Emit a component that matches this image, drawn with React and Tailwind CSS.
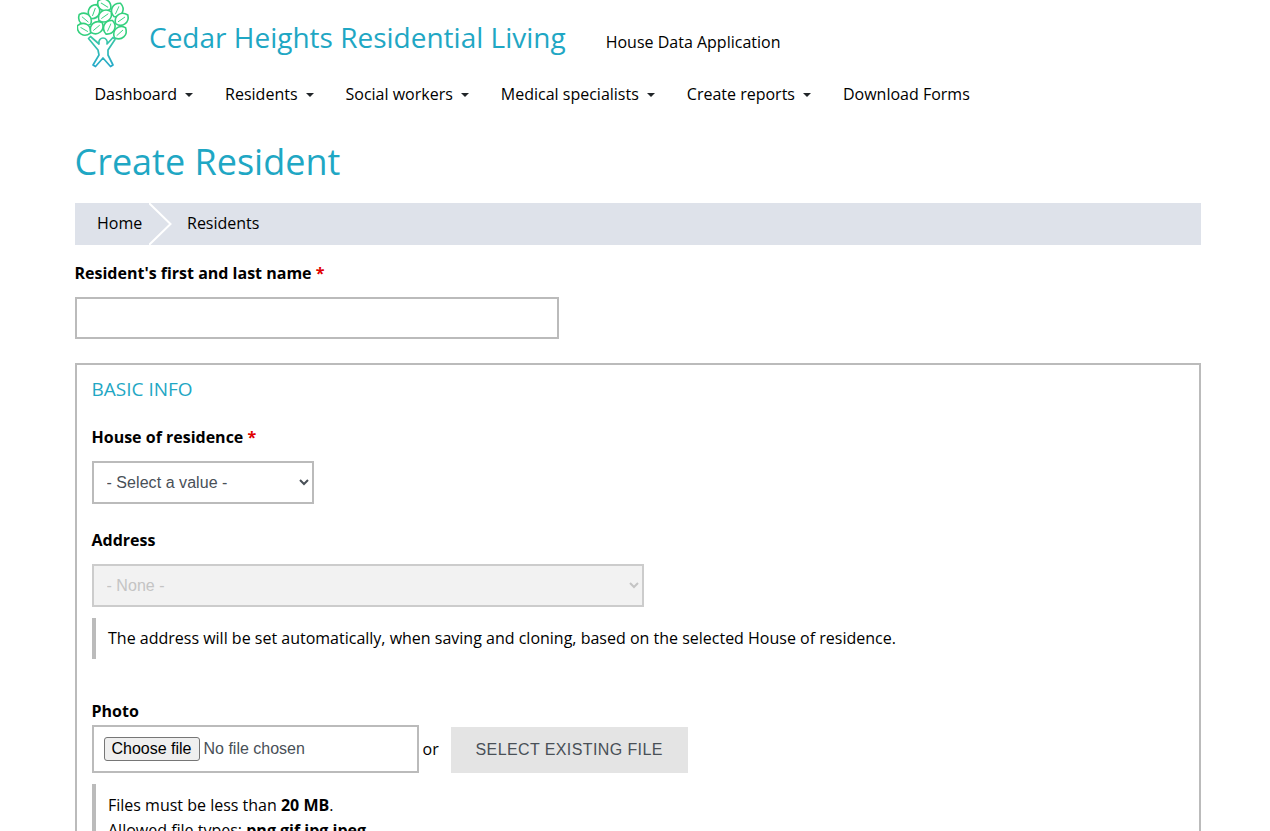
import React from "react";

function Leaf({ x, y, r, rx = 7.5, ry = 7.5 }) {
  return (
    <g transform={`translate(${x} ${y}) rotate(${r})`}>
      <path
        d={`M0 ${-ry} C${rx} ${-ry * 0.6} ${rx} ${ry * 0.6} 0 ${ry} C${-rx} ${ry * 0.6} ${-rx} ${-ry * 0.6} 0 ${-ry} Z`}
        fill="#fff"
        stroke="url(#lg)"
        strokeWidth="1.6"
      />
      <path d={`M0 ${-ry + 3.5} L0 ${ry - 3}`} stroke="url(#lg)" strokeWidth="0.9" fill="none" />
    </g>
  );
}

function Logo() {
  return (
    <svg width="56" height="70" viewBox="0 0 56 70" className="shrink-0">
      <defs>
        <linearGradient id="lg" x1="0" y1="0" x2="0" y2="70" gradientUnits="userSpaceOnUse">
          <stop offset="0" stopColor="#33d07c" />
          <stop offset="0.5" stopColor="#3acba0" />
          <stop offset="1" stopColor="#25a6cf" />
        </linearGradient>
      </defs>
      <Leaf x={27.3} y={5} r={-58} />
      <Leaf x={17} y={11.7} r={20} />
      <Leaf x={40.3} y={10} r={25} />
      <Leaf x={28} y={16} r={55} />
      <Leaf x={44.7} y={19.3} r={55} />
      <Leaf x={8} y={19.3} r={-50} />
      <Leaf x={7} y={29.3} r={-60} />
      <Leaf x={19.7} y={27.7} r={50} />
      <Leaf x={32.3} y={27.3} r={25} />
      <Leaf x={43} y={32.7} r={48} />
      <path
        d="M13.5 36.5 L22 44 C21 40 24 38 26 38 C29 38 31 41 30 44 L36 37.5 L38 39.5 L31 50 L31 55 L36 65 L33.5 66.5 L26 58 L18.5 66.5 L16 65 L22 55 L21 50 L11.5 38.5 Z"
        fill="#fff"
        stroke="url(#lg)"
        strokeWidth="1.7"
        strokeLinejoin="round"
      />
    </svg>
  );
}

function NavItem({ label, caret = true }) {
  return (
    <a className="flex items-center px-4 h-10 text-black text-base whitespace-nowrap">
      {label}
      {caret && (
        <span className="ml-2 w-0 h-0 border-x-[4.8px] border-x-transparent border-t-[4.8px] border-t-[#212529] mt-[2px]" />
      )}
    </a>
  );
}

function Req() {
  return <span className="text-[#e00000]"> *</span>;
}

function Label({ children }) {
  return <label className="block font-bold text-base leading-6 text-black">{children}</label>;
}

const native = { fontFamily: '"Liberation Sans", Arial, sans-serif' };

export default function App() {
  return (
    <div className="h-[831px] overflow-hidden bg-white text-black font-['Open_Sans',sans-serif]">
      <div className="w-[1126.5px] ml-[74.5px]">
        <header className="flex items-start pl-[2.5px] h-[70px]">
          <Logo />
          <span className="ml-[16px] mt-[15px] text-[28px] leading-[44px] text-[#1fa7c4] whitespace-nowrap">
            Cedar Heights Residential Living
          </span>
          <span className="ml-10 mt-[30px] text-base leading-6">House Data Application</span>
        </header>
        <nav className="flex pl-1 mt-1">
          <NavItem label="Dashboard" />
          <NavItem label="Residents" />
          <NavItem label="Social workers" />
          <NavItem label="Medical specialists" />
          <NavItem label="Create reports" />
          <NavItem label="Download Forms" caret={false} />
        </nav>
        <h1 className="mt-[21px] text-[36px] leading-[54px] text-[#1fa7c4] font-normal">Create Resident</h1>
        <div className="mt-[14px] h-[42px] pb-[2px] bg-[#dee2ea] flex items-center relative text-base">
          <span className="pl-[22.5px] w-[112.5px]">Home</span>
          <span>Residents</span>
          <svg width="26" height="42" viewBox="0 0 26 42" className="absolute left-[74.5px] top-0">
            <path d="M0 0 L21.5 21 L0 42" fill="none" stroke="#fff" strokeWidth="2" />
          </svg>
        </div>
        <div className="mt-4">
          <Label>
            Resident's first and last name
            <Req />
          </Label>
        </div>
        <input
          type="text"
          className="block mt-3 w-[484px] h-[42px] border-2 border-[#bbbbbb] bg-white outline-none"
        />
        <fieldset className="mt-6 border-2 border-[#bbbbbb] px-[15px] pt-[10px] h-[600px]">
          <div className="text-[19px] leading-[28px] text-[#1fa7c4]">BASIC INFO</div>
          <div className="mt-[22px]">
            <Label>
              House of residence
              <Req />
            </Label>
          </div>
          <select
            style={native}
            className="block mt-3 w-[222px] h-[43px] pl-[9px] border-2 border-[#bbbbbb] bg-white text-base text-[#495057] tracking-[0.05px] outline-none"
            defaultValue=""
          >
            <option value="">- Select a value -</option>
          </select>
          <div className="mt-[24px]">
            <Label>Address</Label>
          </div>
          <select
            disabled
            style={native}
            className="block mt-3 w-[552px] h-[43px] pl-[9px] border-2 border-[#cccccc] bg-[#f2f2f2] text-base text-[#c4c4c4] tracking-[0.05px] outline-none"
            defaultValue=""
          >
            <option value="">- None -</option>
          </select>
          <div className="mt-[11px] border-l-4 border-[#bbbbbb] pl-[12.5px] pb-[2px] h-[41px] flex items-center text-base">
            The address will be set automatically, when saving and cloning, based on the selected House of residence.
          </div>
          <div className="mt-10">
            <Label>Photo</Label>
          </div>
          <div className="flex items-center mt-[2px]">
            <div className="w-[327px] h-[48px] border-2 border-[#bbbbbb] flex items-center pl-[10px]" style={native}>
              <button className="h-6 w-[96px] border border-[#767676] rounded-[3px] bg-[#efefef] text-base text-black leading-none">
                Choose file
              </button>
              <span className="ml-1 text-base text-[#495057]">No file chosen</span>
            </div>
            <span className="ml-1 text-base">or</span>
            <button
              style={native}
              className="ml-3 mt-[2px] w-[237px] h-[46px] bg-[#e4e4e4] text-[#495057] text-base tracking-[0.4px]"
            >
              SELECT EXISTING FILE
            </button>
          </div>
          <div className="mt-[11px] border-l-4 border-[#bbbbbb] pl-[12.5px] pt-[9px] pb-2 text-base leading-[25px]">
            <div>
              Files must be less than <b>20 MB</b>.
            </div>
            <div>
              Allowed file types: <b>png gif jpg jpeg</b>.
            </div>
          </div>
        </fieldset>
      </div>
    </div>
  );
}
